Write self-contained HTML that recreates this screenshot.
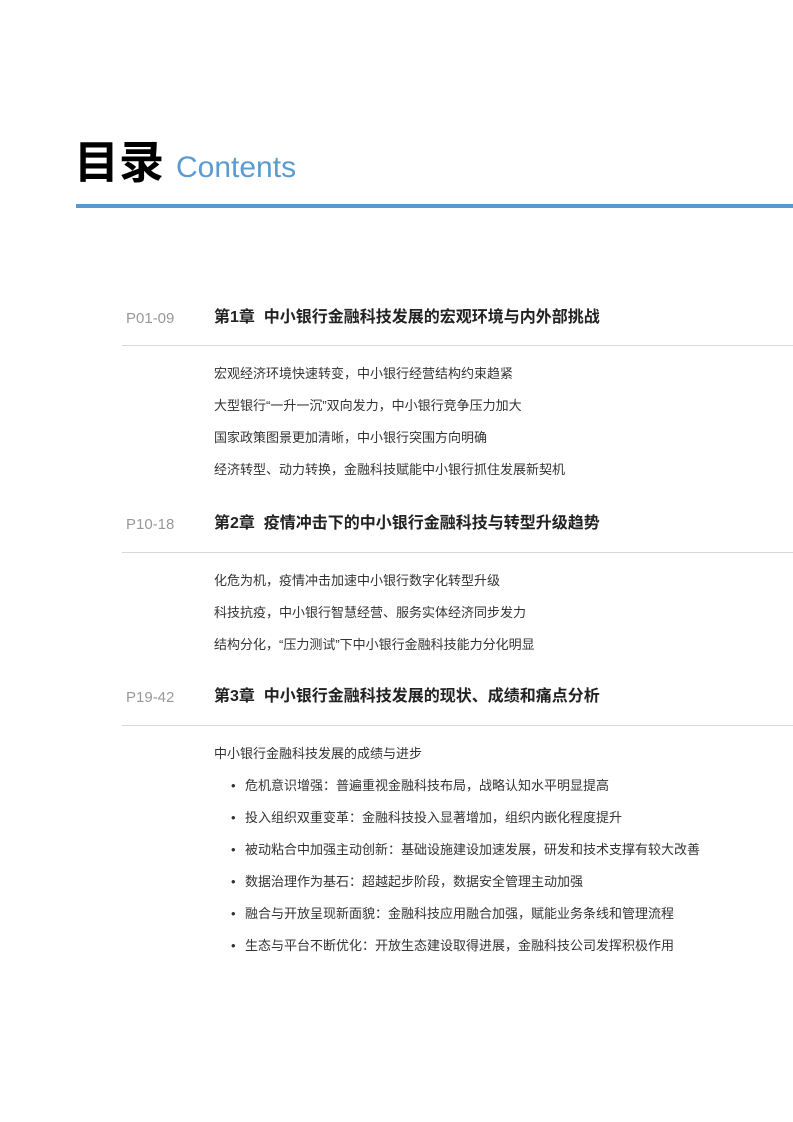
<!DOCTYPE html>
<html><head><meta charset="utf-8"><style>
body{margin:0;width:793px;height:1122px;background:#fff;position:relative;overflow:hidden;font-family:"Liberation Sans","Noto Sans CJK SC",sans-serif;}
.a{position:absolute;white-space:nowrap;line-height:1;}
.p{left:126px;font-size:15px;color:#999;}
.c{left:214px;font-size:16px;font-weight:bold;color:#222;}
.l{position:absolute;left:122px;right:0;height:1px;background:#d8d8d8;}
.i{left:214px;font-size:13px;color:#333;}
.b{left:231px;font-size:13px;color:#333;}
.b span{display:inline-block;width:14px;}
</style></head><body>
<div class="a" style="left:74px;top:136px;font-size:45px;font-weight:bold;color:#000;font-family:'Noto Sans CJK SC',sans-serif;">目录</div>
<div class="a" style="left:176px;top:153px;font-size:30px;color:#5b9bd0;">Contents</div>
<div style="position:absolute;left:76px;right:0;top:204px;height:4px;background:#5a98cd;"></div>

<div class="a p" style="top:311px">P01-09</div>
<div class="a c" style="top:310px">第1章&nbsp;&nbsp;中小银行金融科技发展的宏观环境与内外部挑战</div>
<div class="l" style="top:345px"></div>
<div class="a i" style="top:367px">宏观经济环境快速转变，中小银行经营结构约束趋紧</div>
<div class="a i" style="top:399px">大型银行“一升一沉”双向发力，中小银行竞争压力加大</div>
<div class="a i" style="top:431px">国家政策图景更加清晰，中小银行突围方向明确</div>
<div class="a i" style="top:463px">经济转型、动力转换，金融科技赋能中小银行抓住发展新契机</div>

<div class="a p" style="top:517px">P10-18</div>
<div class="a c" style="top:516px">第2章&nbsp;&nbsp;疫情冲击下的中小银行金融科技与转型升级趋势</div>
<div class="l" style="top:552px"></div>
<div class="a i" style="top:574px">化危为机，疫情冲击加速中小银行数字化转型升级</div>
<div class="a i" style="top:606px">科技抗疫，中小银行智慧经营、服务实体经济同步发力</div>
<div class="a i" style="top:638px">结构分化，“压力测试”下中小银行金融科技能力分化明显</div>

<div class="a p" style="top:690px">P19-42</div>
<div class="a c" style="top:689px">第3章&nbsp;&nbsp;中小银行金融科技发展的现状、成绩和痛点分析</div>
<div class="l" style="top:725px"></div>
<div class="a i" style="top:747px">中小银行金融科技发展的成绩与进步</div>
<div class="a b" style="top:779px"><span>•</span>危机意识增强：普遍重视金融科技布局，战略认知水平明显提高</div>
<div class="a b" style="top:811px"><span>•</span>投入组织双重变革：金融科技投入显著增加，组织内嵌化程度提升</div>
<div class="a b" style="top:843px"><span>•</span>被动粘合中加强主动创新：基础设施建设加速发展，研发和技术支撑有较大改善</div>
<div class="a b" style="top:875px"><span>•</span>数据治理作为基石：超越起步阶段，数据安全管理主动加强</div>
<div class="a b" style="top:907px"><span>•</span>融合与开放呈现新面貌：金融科技应用融合加强，赋能业务条线和管理流程</div>
<div class="a b" style="top:939px"><span>•</span>生态与平台不断优化：开放生态建设取得进展，金融科技公司发挥积极作用</div>
</body></html>
